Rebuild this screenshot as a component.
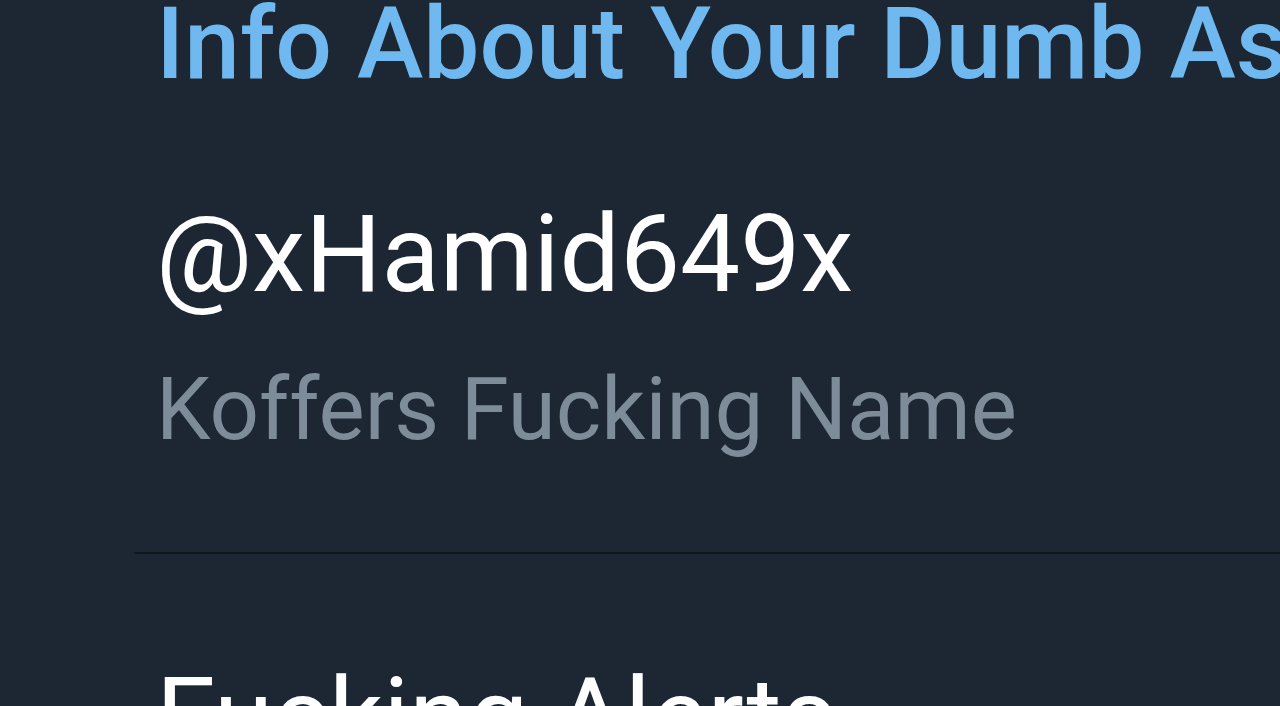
import React from 'react';

const App: React.FC = () => {
  return (
    <div className="w-[1280px] h-[706px] overflow-hidden bg-[#1d2733] font-['Roboto',sans-serif]">
      <div className="pl-[156px] whitespace-nowrap">
        <h2 className="mt-[-6px] text-[100px] leading-none font-medium text-[#6fb9f0]">
          Info About Your Dumb Ass
        </h2>
        <p className="mt-[107px] text-[107px] leading-none text-white">@xHamid649x</p>
        <p className="mt-[58px] text-[87px] leading-none text-[#7e8c99]">Koffers Fucking Name</p>
      </div>

      <div className="ml-[134px] mt-[99px] h-[2px] bg-[#10171e]"></div>

      <div className="pl-[156px] whitespace-nowrap">
        <p className="mt-[110px] text-[107px] leading-none text-white">Fucking Alerts</p>
      </div>
    </div>
  );
};

export default App;
